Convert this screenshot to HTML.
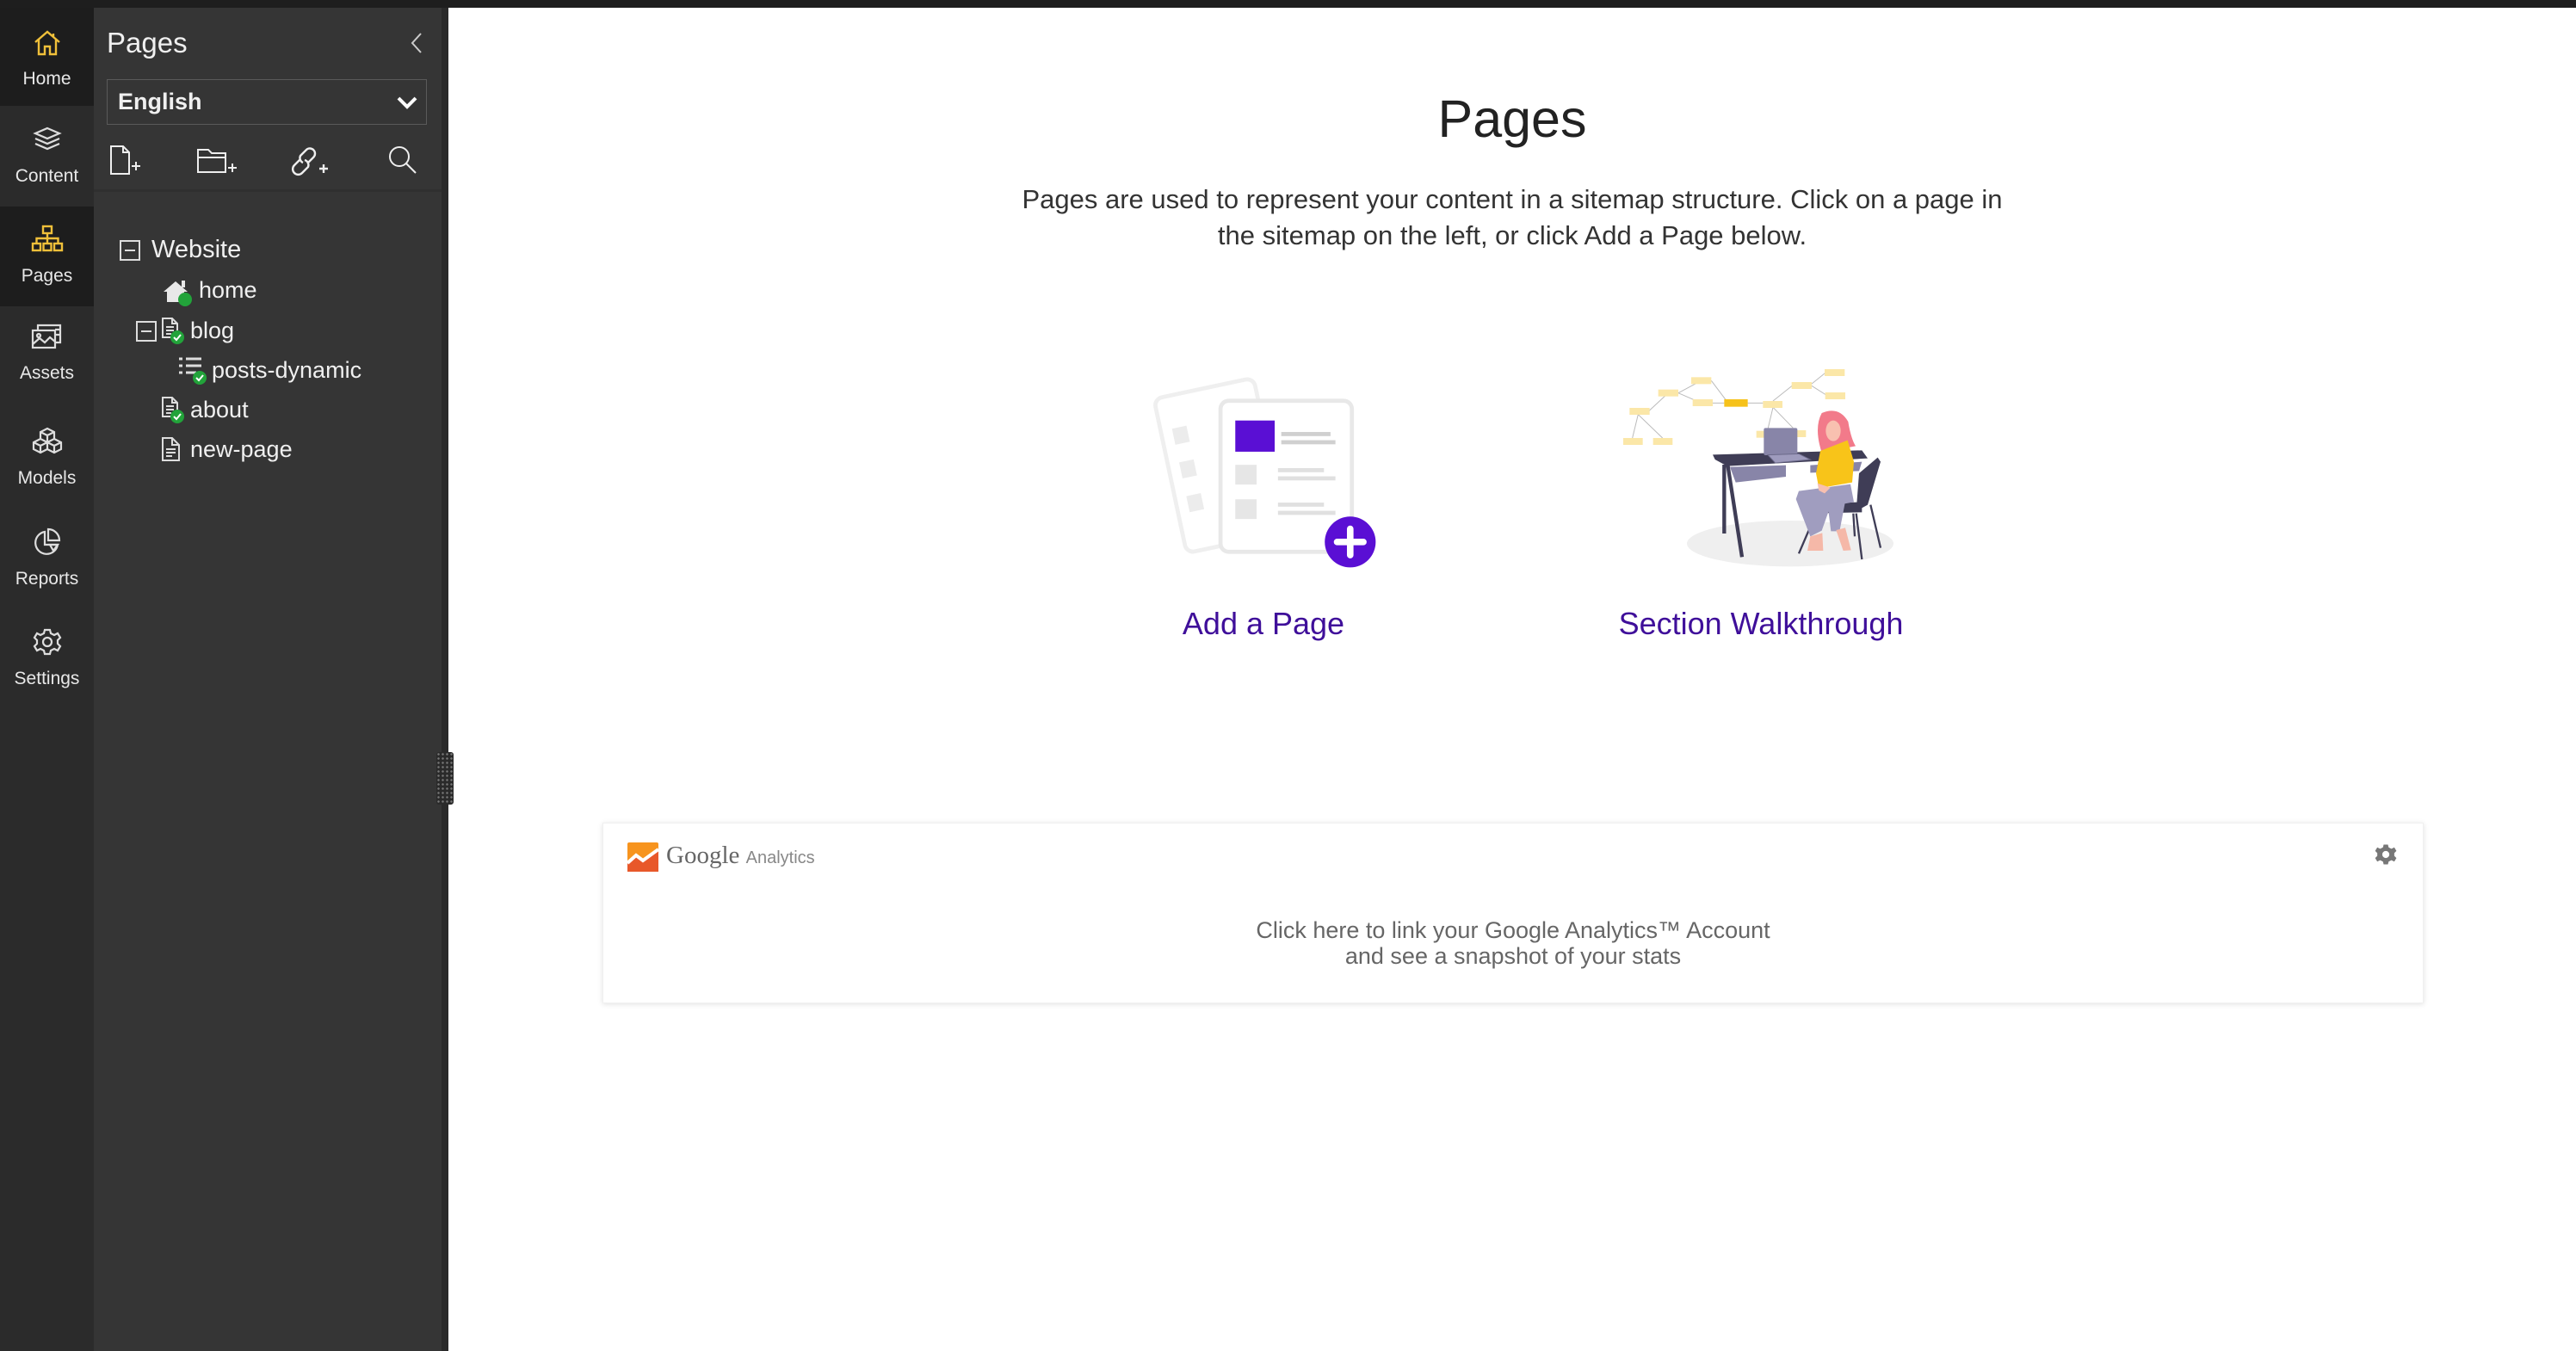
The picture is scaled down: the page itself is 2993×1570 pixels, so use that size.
<!DOCTYPE html>
<html><head><meta charset="utf-8"><style>
*{margin:0;padding:0;box-sizing:border-box}
body{width:2993px;height:1570px;overflow:hidden;background:#fff;font-family:"Liberation Sans",sans-serif;position:relative}
.abs{position:absolute}
#topbar{left:0;top:0;width:2993px;height:9px;background:#1e1e1e}
#nav{left:0;top:0;width:109px;height:1570px;background:#2b2b2b}
.ni{position:absolute;left:0;width:109px;text-align:center;color:#e8e8e8;font-size:21px}
.ni svg{display:block;margin:0 auto}
.ni div{position:relative;top:6px}
#panel{left:109px;top:0;width:404px;height:1570px;background:#353535}
#gap{left:513px;top:0;width:8px;height:1570px;background:#2a2a2a}
.tw{position:absolute;color:#f0f0f0;font-size:27px;white-space:nowrap}
</style></head><body>
<div class="abs" id="nav"></div>
<div class="abs" style="left:0;top:9px;width:109px;height:114px;background:#1d1d1d"></div>
<div class="abs" style="left:0;top:240px;width:109px;height:116px;background:#1d1d1d"></div>
<div class="abs" id="panel"></div>
<div class="abs" id="gap"></div>
<div class="abs" id="topbar"></div>

<div class="ni" style="top:34px"><svg width="34" height="32" viewBox="0 0 34 32" fill="none" stroke="#f0c03a" stroke-width="2.4"><path d="M3 15 L17 3 L31 15 M7 12 V29 H14 V20 H20 V29 H27 V12 M24 5 V9"/></svg><div style="margin-top:8px">Home</div></div>
<div class="ni" style="top:146px"><svg width="34" height="32" viewBox="0 0 34 32" fill="none" stroke="#ddd" stroke-width="2.2"><path d="M17 3 L31 9 L17 15 L3 9Z M3 15 L17 21 L31 15 M3 21 L17 27 L31 21"/></svg><div style="margin-top:9px">Content</div></div>
<div class="ni" style="top:261px"><svg width="38" height="32" viewBox="0 0 38 32" fill="none" stroke="#f0c03a" stroke-width="2.4"><rect x="14" y="2" width="10" height="8"/><rect x="2" y="22" width="9" height="8"/><rect x="14.5" y="22" width="9" height="8"/><rect x="27" y="22" width="9" height="8"/><path d="M19 10 V22 M6.5 22 V16 H31.5 V22"/></svg><div style="margin-top:10px">Pages</div></div>
<div class="ni" style="top:375px"><svg width="40" height="32" viewBox="0 0 40 32" fill="none" stroke="#ddd" stroke-width="2.2"><rect x="3" y="9" width="26" height="20"/><path d="M9 9 V3 H35 V23 H29 M29 8 H35 M29 14 H35 M3 25 L11 18 L17 23 L23 17 L29 22"/><circle cx="10" cy="15" r="2"/></svg><div style="margin-top:9px">Assets</div></div>
<div class="ni" style="top:496px"><svg width="42" height="34" viewBox="0 0 42 34" fill="none" stroke="#ddd" stroke-width="2.2"><path d="M21 2 L29 6 V14 L21 18 L13 14 V6Z M13 6 L21 10 L29 6 M21 10 V18 M13 14 L5 18 V26 L13 30 L21 26 V18 M5 18 L13 22 L21 18 M13 22 V30 M29 14 L37 18 V26 L29 30 L21 26 M21 18 L29 22 L37 18 M29 22 V30"/></svg><div style="margin-top:8px">Models</div></div>
<div class="ni" style="top:613px"><svg width="34" height="34" viewBox="0 0 34 34" fill="none" stroke="#ddd" stroke-width="2.2"><path d="M14 5 A13 13 0 1 0 29 20 H14Z M18 2 A13 13 0 0 1 31 15 H18Z"/><path d="M20 20 L29 20 L24 27Z"/></svg><div style="margin-top:8px">Reports</div></div>
<div class="ni" style="top:729px"><svg width="34" height="34" viewBox="0 0 34 34" fill="none" stroke="#ddd" stroke-width="2.2"><circle cx="17" cy="17" r="5"/><path d="M14 3 H20 L21 7 L25 9 L29 7 L32 12 L29 15 V19 L32 22 L29 27 L25 25 L21 27 L20 31 H14 L13 27 L9 25 L5 27 L2 22 L5 19 V15 L2 12 L5 7 L9 9 L13 7Z"/></svg><div style="margin-top:8px">Settings</div></div>

<div class="tw" style="left:124px;top:31px;font-size:33px">Pages</div>
<svg class="abs" style="left:476px;top:37px" width="16" height="26" viewBox="0 0 16 26" fill="none" stroke="#ccc" stroke-width="2"><path d="M13 2 L3 13 L13 24"/></svg>
<div class="abs" style="left:124px;top:92px;width:372px;height:53px;border:1.5px solid #5a5a5a;background:#353535"></div>
<div class="tw" style="left:137px;top:103px;font-weight:bold;font-size:27px">English</div>
<svg class="abs" style="left:461px;top:111px" width="24" height="16" viewBox="0 0 24 16" fill="none" stroke="#fff" stroke-width="4"><path d="M2 3 L12 13 L22 3"/></svg>
<svg class="abs" style="left:126px;top:168px" width="42" height="38" viewBox="0 0 42 38" fill="none" stroke="#eee" stroke-width="2"><path d="M3 2 H17 L24 9 V34 H3Z M17 2 V9 H24 M27 25 H37 M32 20 V30"/></svg>
<svg class="abs" style="left:227px;top:172px" width="50" height="34" viewBox="0 0 50 34" fill="none" stroke="#eee" stroke-width="2"><path d="M3 2 H15 L19 6 H35 V28 H3Z M3 11 H35 M38 23 H48 M43 18 V28"/></svg>
<svg class="abs" style="left:335px;top:169px" width="50" height="38" viewBox="0 0 50 38" fill="none" stroke="#eee" stroke-width="2.4"><path d="M14 16 L7 23 A6 6 0 0 0 16 32 L23 25 A6 6 0 0 0 19 17 M22 21 L29 14 A6 6 0 0 0 21 5 L14 12 A6 6 0 0 0 17 20 M36 27 H46 M41 22 V32"/></svg>
<svg class="abs" style="left:448px;top:168px" width="40" height="36" viewBox="0 0 40 36" fill="none" stroke="#eee" stroke-width="2"><circle cx="16" cy="14" r="11"/><path d="M24 22 L35 33"/></svg>
<div class="abs" style="left:109px;top:220px;width:404px;height:3px;background:#2f2f2f"></div>

<svg class="abs" style="left:138px;top:278px" width="26" height="26" viewBox="0 0 26 26" fill="none" stroke="#ddd" stroke-width="2"><rect x="2" y="2" width="22" height="22"/><path d="M7 13 H19"/></svg>
<div class="tw" style="left:176px;top:274px;font-size:29px">Website</div>
<svg class="abs" style="left:188px;top:323px" width="38" height="34" viewBox="0 0 38 34"><path d="M2 16 L16 4 L30 16 H26 V28 H6 V16Z" fill="#e8e8e8"/><rect x="23" y="3" width="4" height="8" fill="#e8e8e8"/><circle cx="27" cy="25" r="8" fill="#22a33a"/></svg>
<div class="tw" style="left:231px;top:322px">home</div>
<svg class="abs" style="left:157px;top:372px" width="26" height="26" viewBox="0 0 26 26" fill="none" stroke="#ddd" stroke-width="2"><rect x="2" y="2" width="22" height="22"/><path d="M7 13 H19"/></svg>
<svg class="abs" style="left:187px;top:368px" width="32" height="36" viewBox="0 0 32 36"><path d="M2 2 H13 L19 8 V24 H2Z M13 2 V8 H19 M6 12 H15 M6 16 H15 M6 20 H12" fill="none" stroke="#ddd" stroke-width="2"/><circle cx="19" cy="24" r="8" fill="#22a33a"/><path d="M15 24 L18 27 L23 21" fill="none" stroke="#fff" stroke-width="2"/></svg>
<div class="tw" style="left:221px;top:369px">blog</div>
<svg class="abs" style="left:206px;top:413px" width="40" height="36" viewBox="0 0 40 36"><path d="M2 4 H6 M10 4 H28 M2 12 H6 M10 12 H28 M2 20 H6 M10 20 H22" stroke="#ddd" stroke-width="3"/><circle cx="26" cy="26" r="8" fill="#22a33a"/><path d="M22 26 L25 29 L30 23" fill="none" stroke="#fff" stroke-width="2"/></svg>
<div class="tw" style="left:246px;top:415px">posts-dynamic</div>
<svg class="abs" style="left:187px;top:460px" width="32" height="36" viewBox="0 0 32 36"><path d="M2 2 H13 L19 8 V24 H2Z M13 2 V8 H19 M6 12 H15 M6 16 H15 M6 20 H12" fill="none" stroke="#ddd" stroke-width="2"/><circle cx="19" cy="24" r="8" fill="#22a33a"/><path d="M15 24 L18 27 L23 21" fill="none" stroke="#fff" stroke-width="2"/></svg>
<div class="tw" style="left:221px;top:461px">about</div>
<svg class="abs" style="left:187px;top:507px" width="24" height="30" viewBox="0 0 24 30"><path d="M2 2 H13 L21 10 V28 H2Z M13 2 V10 H21 M6 15 H17 M6 19 H17 M6 23 H13" fill="none" stroke="#ddd" stroke-width="2"/></svg>
<div class="tw" style="left:221px;top:507px">new-page</div>
<div class="abs" style="left:507px;top:874px;width:20px;height:61px;background:#2a2a2a;border-radius:3px;background-image:radial-gradient(#777 1px,transparent 1.5px);background-size:5px 5px"></div>

<div class="abs" style="left:521px;top:103px;width:2472px;text-align:center;font-size:61px;color:#222">Pages</div>
<div class="abs" style="left:521px;top:211px;width:2472px;text-align:center;font-size:31px;line-height:42px;color:#333">Pages are used to represent your content in a sitemap structure. Click on a page in<br>the sitemap on the left, or click Add a Page below.</div>

<svg class="abs" style="left:1336px;top:420px" width="271" height="248" viewBox="700 220 142 130">
<g transform="rotate(-12 740 285)"><rect x="712" y="236" width="62" height="96" rx="5" fill="#fff" stroke="#efefef" stroke-width="2.5"/><rect x="719" y="256" width="9" height="10" fill="#ececec"/><rect x="719" y="277" width="9" height="10" fill="#ececec"/><rect x="719" y="298" width="9" height="10" fill="#ececec"/></g>
<rect x="743" y="244" width="80" height="92" rx="5" fill="#fff" stroke="#e8e8e8" stroke-width="2.5"/>
<rect x="752" y="256" width="24" height="19" fill="#5a0fd4"/>
<rect x="780" y="263" width="30" height="2.5" fill="#d0d0d0"/><rect x="780" y="268" width="33" height="2.5" fill="#d0d0d0"/>
<rect x="752" y="283" width="13" height="12" fill="#e6e6e6"/><rect x="778" y="285" width="28" height="2.5" fill="#e0e0e0"/><rect x="778" y="290" width="35" height="2.5" fill="#e0e0e0"/>
<rect x="752" y="304" width="13" height="12" fill="#e6e6e6"/><rect x="778" y="306" width="28" height="2.5" fill="#e0e0e0"/><rect x="778" y="311" width="35" height="2.5" fill="#e0e0e0"/>
<circle cx="822" cy="330" r="15.5" fill="#5a0fd4"/><path d="M822 322 V338 M814 330 H830" stroke="#fff" stroke-width="4" stroke-linecap="round"/>
</svg>

<svg class="abs" style="left:1870px;top:410px" width="360" height="260" viewBox="0 0 1080 780">
<g stroke="#bbb" stroke-width="3" fill="none"><path d="M135 205 L205 140 M100 215 L80 297 M100 215 L185 297 M240 140 L320 97 M240 140 L320 175 M355 97 L410 170 M360 175 L400 175 M482 175 L535 175 M570 168 L640 112 M700 112 L755 68 M700 112 L760 150 M570 190 L550 275 M570 190 L640 262"/></g>
<g fill="#fbe7a8"><rect x="285" y="85" width="70" height="24"/><rect x="170" y="128" width="70" height="24"/><rect x="290" y="162" width="70" height="24"/><rect x="70" y="192" width="70" height="24"/><rect x="48" y="297" width="68" height="24"/><rect x="152" y="297" width="68" height="24"/><rect x="635" y="102" width="70" height="24"/><rect x="750" y="57" width="70" height="24"/><rect x="752" y="138" width="70" height="24"/><rect x="535" y="168" width="68" height="24"/><rect x="512" y="272" width="60" height="24"/><rect x="640" y="270" width="45" height="24"/></g>
<rect x="400" y="162" width="82" height="26" fill="#f6c21b"/>
<ellipse cx="630" cy="665" rx="360" ry="80" fill="#efefef"/>
<path d="M400 390 L400 630 M412 390 L462 712" stroke="#3f3d56" stroke-width="13"/>
<path d="M360 355 L880 340 L900 368 L410 395 L368 372Z" fill="#3f3d56"/>
<path d="M420 398 L615 392 L615 432 L440 452Z" fill="#8885a8"/>
<path d="M700 392 L880 380 L870 412 L700 418Z" fill="#8885a8"/>
<rect x="538" y="262" width="117" height="95" rx="6" fill="#8885a8"/>
<path d="M552 356 L660 352 L700 372 L578 384Z" fill="#9e9bbd" stroke="#6c6a8a" stroke-width="3"/>
<path d="M860 560 L880 720 M910 530 L945 680 M720 560 L660 700 M850 560 L855 640" stroke="#3f3d56" stroke-width="7"/>
<path d="M935 365 L945 380 L900 530 L860 552 L870 420Z" fill="#3f3d56"/>
<path d="M700 528 L880 520 L880 556 L705 560Z" fill="#3f3d56"/>
<path d="M740 210 Q800 185 832 240 Q842 300 858 325 L740 348 Q712 262 740 210Z" fill="#f27a8a"/>
<ellipse cx="780" cy="272" rx="26" ry="36" fill="#f8c0b0"/>
<path d="M735 342 L830 305 L852 380 L846 452 L730 472 L720 420Z" fill="#f8c419"/>
<path d="M660 482 L840 458 L852 520 L770 535 L740 620 L700 640 L650 510Z" fill="#a09dbf"/>
<path d="M760 525 L822 518 L802 622 L772 622Z" fill="#a09dbf"/>
<path d="M700 640 L742 628 L745 690 L690 690Z M790 618 L822 610 L842 688 L815 690Z" fill="#f5b8a8"/>
<path d="M725 455 L770 470 L750 490 L730 480Z" fill="#f8c0b0"/>
</svg>

<div class="abs" style="left:1300px;top:704px;width:336px;text-align:center;font-size:36px;color:#3f0f9a">Add a Page</div>
<div class="abs" style="left:1840px;top:704px;width:412px;text-align:center;font-size:36px;color:#3f0f9a">Section Walkthrough</div>

<div class="abs" style="left:700px;top:956px;width:2116px;height:210px;background:#fff;box-shadow:0 1px 6px rgba(0,0,0,0.12);border:1px solid #f0f0f0"></div>
<svg class="abs" style="left:729px;top:979px" width="36" height="34" viewBox="0 0 36 34"><rect width="36" height="34" rx="2" fill="#f7941e"/><path d="M0 34 V22 L10 14 L18 20 L36 8 V34Z" fill="#e8582a"/><path d="M0 24 L10 15 L18 21 L36 8" stroke="#fff" stroke-width="4" fill="none"/></svg>
<div class="abs" style="left:774px;top:978px;font-family:'Liberation Serif',serif;font-size:29px;color:#666">Google <span style="font-family:'Liberation Sans',sans-serif;font-size:20px;color:#888">Analytics</span></div>
<svg class="abs" style="left:2758px;top:979px" width="28" height="28" viewBox="0 0 34 34"><path d="M14 3 H20 L21 7 L25 9 L29 7 L32 12 L29 15 V19 L32 22 L29 27 L25 25 L21 27 L20 31 H14 L13 27 L9 25 L5 27 L2 22 L5 19 V15 L2 12 L5 7 L9 9 L13 7Z" fill="#777"/><circle cx="17" cy="17" r="5" fill="#fff"/></svg>
<div class="abs" style="left:700px;top:1066px;width:2116px;text-align:center;font-size:27px;line-height:30px;color:#666">Click here to link your Google Analytics™ Account<br>and see a snapshot of your stats</div>
</body></html>
